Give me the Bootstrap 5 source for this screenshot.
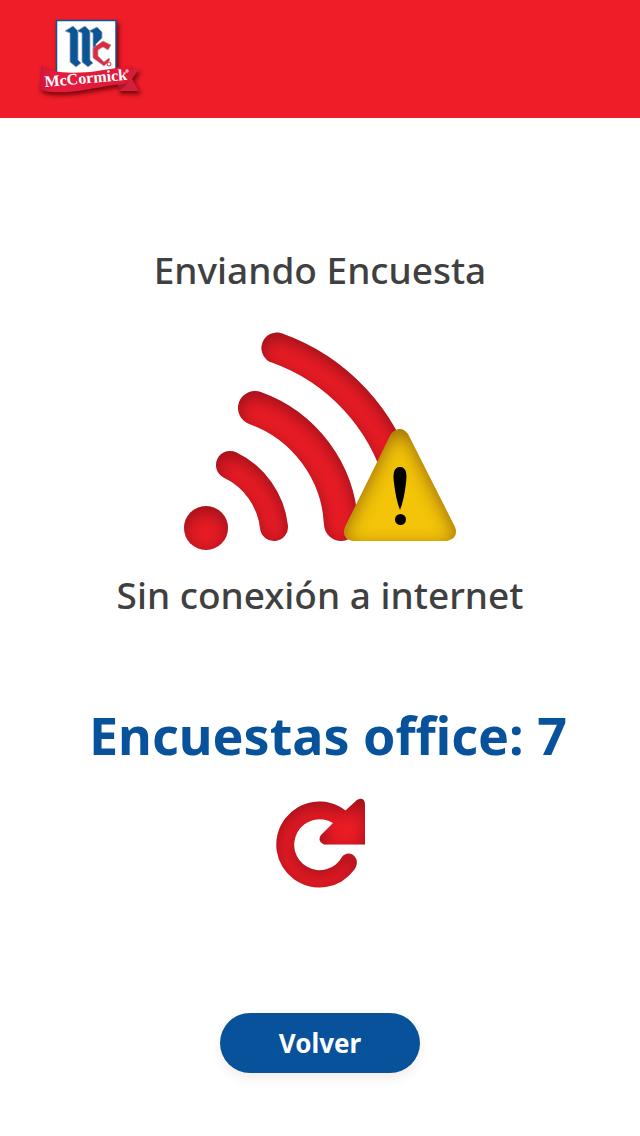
<!DOCTYPE html>
<html lang="es">
<head>
<meta charset="utf-8">
<meta name="viewport" content="width=device-width, initial-scale=1">
<title>Enviando Encuesta</title>
<link href="https://cdn.jsdelivr.net/npm/bootstrap@5.3.0/dist/css/bootstrap.min.css" rel="stylesheet">
<style>
  body { font-family: "Noto Sans", sans-serif; color: #404041; background: #fff; }
  .brand-bar { background: #ee1d27; padding: 14px 36px 16px; }
  .status-text { font-size: 37px; line-height: 48px; font-weight: 500; }
  .count-text { font-size: 52px; line-height: 64px; font-weight: 700; color: #07529b; margin-top: 84px; }
  .screen { padding: 128px 16px 62px; }
  .signal-icon { margin: 37px 0 20px; }
  .retry { margin-top: 30px; }
  .btn-back { width: 200px; height: 60px; margin-top: 126px; background: #07529b; color: #fff; font-size: 26px; line-height: 32px; font-weight: 700; box-shadow: 0 6px 12px rgba(120, 20, 20, .07); }
  .btn-back:hover { background: #06447f; color: #fff; }
</style>
</head>
<body>
<header class="navbar brand-bar">
  <a class="navbar-brand d-block p-0 m-0" href="#" aria-label="McCormick">
    <svg class="d-block" width="112" height="88" viewBox="36 14 112 88">
      <defs>
        <filter id="logoShadow" x="-20%" y="-20%" width="140%" height="150%" color-interpolation-filters="sRGB"><feDropShadow dx="2" dy="3" stdDeviation="2" flood-color="#5a0008" flood-opacity=".8"/></filter>
        <linearGradient id="ribbon"><stop offset="0" stop-color="#c9173a"/><stop offset=".15" stop-color="#e51b3e"/><stop offset="1" stop-color="#df1a38"/></linearGradient>
      </defs>
      <g filter="url(#logoShadow)">
        <path d="M118 70 L139 69 L132 79 L139 91 L118 91Z" fill="#d2203a"/>
        <path d="M56.500 20.500H116V76H56.500Z" fill="#fff" stroke="#0b5597" stroke-width="1.500"/>
        <path d="M41 65 C52 74 70 73 90 72 C106 70 120 67 130 66 L130 76 Q130 82 124 84 C99 86 75 94 52 92 Q43 92 39 88 Q41 76 41 65Z" fill="url(#ribbon)"/>
        <path d="M118 91 L118 85 L124 84 Q129 82 130 78 Q127 87 118 91Z" fill="#ac162c"/>
      </g>
      <g stroke="#9aa6b5" stroke-width=".8" fill="#0b5597">
        <path d="M65 31 L73 26 L78 31 V60 L81 63 L76 67 L70 62 V33Z"/>
        <path d="M77 31 L85 26 L90 31 V60 L93 63 L88 67 L82 62 V33Z"/>
        <path d="M89 31 L97 27 L102 32 V38 L96 44 V58 L93 54 V33Z"/>
      </g>
      <path d="M103 41 L111 45 L108 50 L103 47 L98 50 V56 L104 62 L109 58 L110 60 L104 66 L93 58 V48Z" fill="#dc2b40" stroke="#a9a0a8" stroke-width=".7"/>
      <circle cx="109" cy="64" r="2" fill="none" stroke="#dc2b40" stroke-width="1"/>
      <text x="45" y="87" transform="rotate(-5 45 87)" font-family="Liberation Serif, serif" font-weight="700" font-size="16" fill="#fff">McCormick</text>
      <circle cx="127" cy="71" r="1.200" fill="none" stroke="#fff" stroke-width=".8"/>
    </svg>
  </a>
</header>
<main class="screen container-fluid d-flex flex-column align-items-center text-center">
  <h1 class="status-text m-0">Enviando Encuesta</h1>
  <svg class="signal-icon" width="272" height="220" viewBox="184 331 272 220" role="img" aria-label="Sin señal">
    <defs>
      <filter id="innerShade" x="-30%" y="-30%" width="160%" height="160%" color-interpolation-filters="sRGB">
        <feComponentTransfer in="SourceAlpha" result="inv"><feFuncA type="table" tableValues="1 0"/></feComponentTransfer>
        <feGaussianBlur in="inv" stdDeviation="9" result="blur"/>
        <feOffset in="blur" dx="0" dy="5" result="off"/>
        <feFlood flood-color="#300008" flood-opacity=".44"/>
        <feComposite in2="off" operator="in"/>
        <feComposite in2="SourceAlpha" operator="in" result="shade"/>
        <feMerge><feMergeNode in="SourceGraphic"/><feMergeNode in="shade"/></feMerge>
      </filter>
    </defs>
    <g filter="url(#innerShade)" fill="none" stroke="#e91c25" stroke-linecap="round">
      <circle cx="206" cy="528" r="22" fill="#e91c25" stroke="none"/>
      <path d="M230 465 A78 78 0 0 1 274 527" stroke-width="28"/>
      <path d="M255 408 A130 130 0 0 1 341 524" stroke-width="34"/>
      <path d="M277 348 A196 196 0 0 1 400 480" stroke-width="31"/>
    </g>
    <path filter="url(#innerShade)" fill="#f3c408" d="M391 434 Q400 424 408 434 L455 527 Q459 538 447 541 L352 541 Q341 538 345 527Z"/>
    <path d="M400 467 C407 467 407 475 406 483 Q404 500 400 510 Q396 500 394 483 C393 475 393 467 400 467Z"/>
    <circle cx="400.500" cy="519.500" r="5.500"/>
  </svg>
  <p class="status-text m-0">Sin conexión a internet</p>
  <p class="count-text mb-0 ps-3">Encuestas office: 7</p>
  <button type="button" class="retry btn p-0 border-0" aria-label="Reintentar">
    <svg class="d-block overflow-visible" width="90" height="90" viewBox="275 797 90 90">
      <path filter="url(#innerShade)" fill="#f01c26" d="M333 823 A25.500 25.500 0 1 0 342 857 C345 853 351 852 355 857 C358 861 357 866 354 870 A43 43 0 1 1 345.500 810.500 L357 800 Q365 796 365 806 V844.500 H324 Q317 841 321 835Z"/>
    </svg>
  </button>
  <button type="button" class="btn btn-back rounded-pill border-0">Volver</button>
</main>
<script src="https://cdn.jsdelivr.net/npm/bootstrap@5.3.0/dist/js/bootstrap.bundle.min.js"></script>
</body>
</html>
